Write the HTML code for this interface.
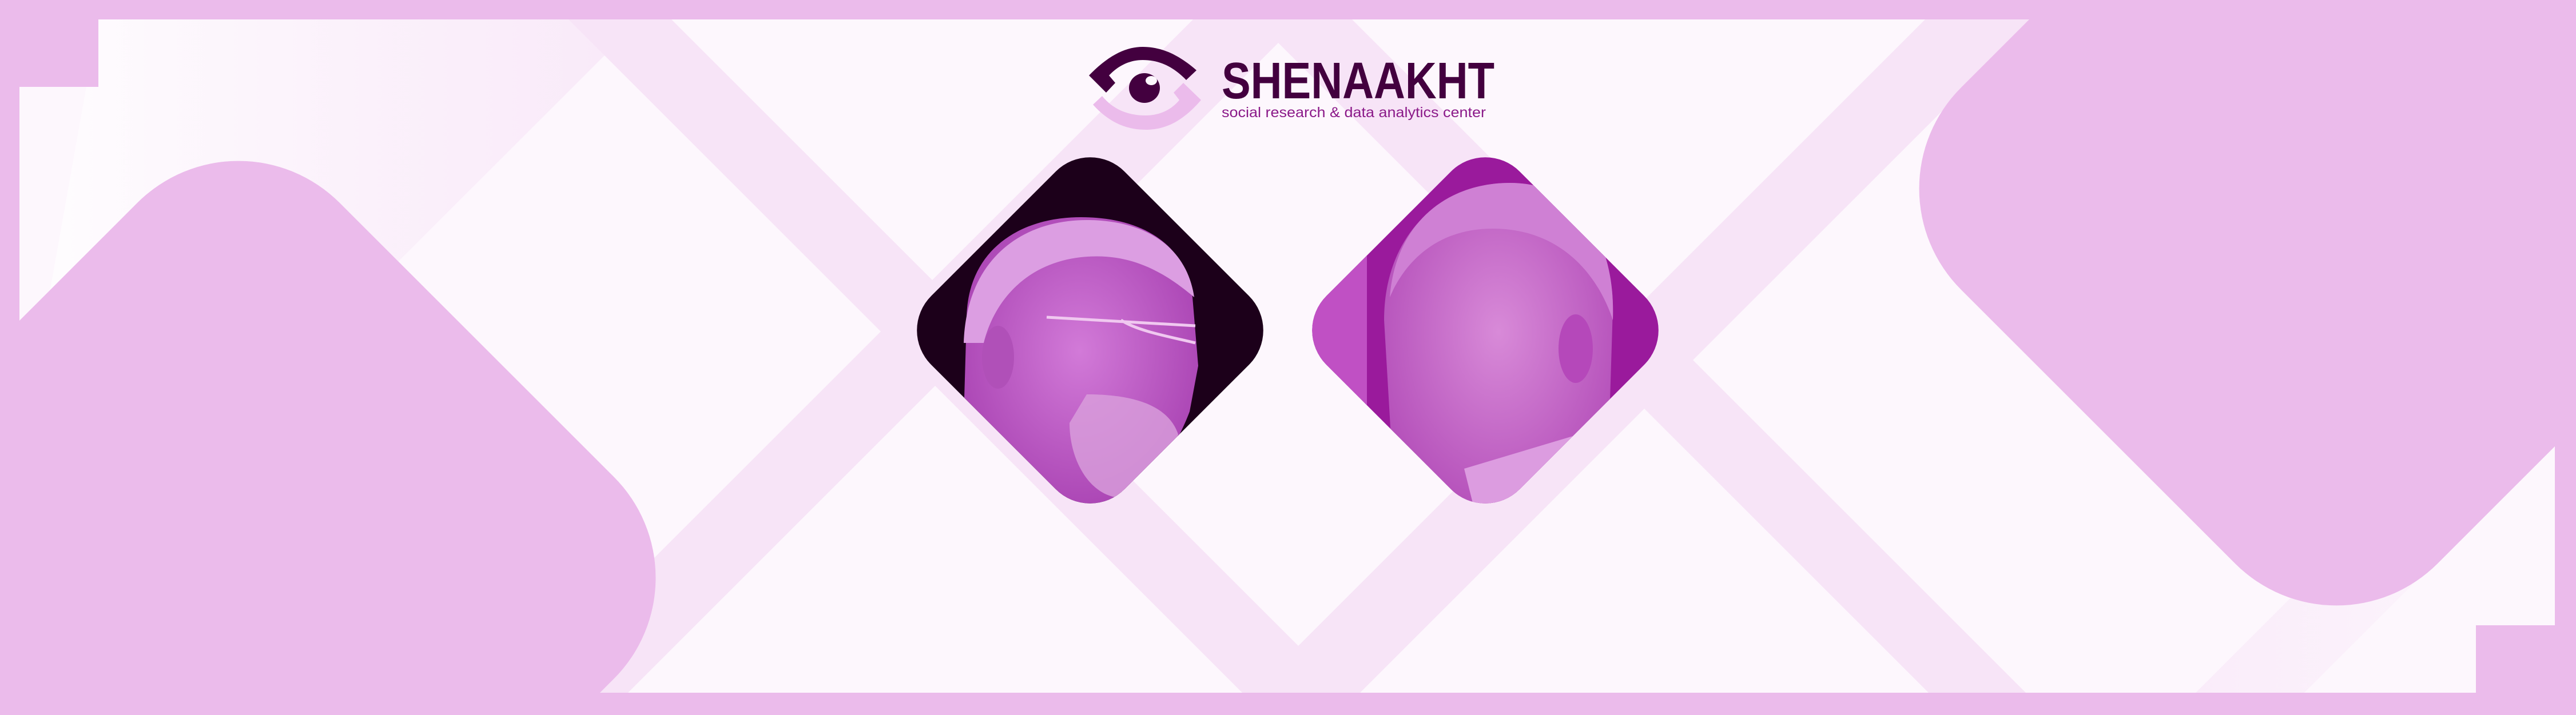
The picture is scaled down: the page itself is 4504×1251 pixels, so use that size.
<!DOCTYPE html>
<html><head><meta charset="utf-8"><style>
html,body{margin:0;padding:0;background:#ebbbeb;overflow:hidden;width:4504px;height:1251px;}
svg{display:block;}
</style></head><body>
<svg width="4504" height="1251" viewBox="0 0 4504 1251" xmlns="http://www.w3.org/2000/svg">
<defs>
<linearGradient id="tl" x1="0" y1="0" x2="1" y2="0">
<stop offset="0" stop-color="#ffffff"/><stop offset="1" stop-color="#f7e4f7" stop-opacity="0.8"/></linearGradient>
<linearGradient id="br" x1="0" y1="0" x2="1" y2="0">
<stop offset="0" stop-color="#f7e4f7"/><stop offset="1" stop-color="#fdf7fd"/></linearGradient>
<clipPath id="inner"><polygon points="172,34 4467,34 4467,1094 4329,1094 4329,1212 34,1212 34,152 172,152"/></clipPath>
<clipPath id="p1"><rect x="1667" y="339" width="478" height="478" rx="85" transform="rotate(45 1906 578)"/></clipPath>
<clipPath id="p2"><rect x="2358" y="339" width="478" height="478" rx="85" transform="rotate(45 2597 578)"/></clipPath>
<radialGradient id="f1" cx="0.5" cy="0.45" r="0.6"><stop offset="0" stop-color="#d27ad8"/><stop offset="1" stop-color="#a63fb0"/></radialGradient>
<radialGradient id="f2" cx="0.5" cy="0.45" r="0.6"><stop offset="0" stop-color="#d88ad8"/><stop offset="1" stop-color="#b24cb8"/></radialGradient>
</defs>
<rect width="4504" height="1251" fill="#ebbbeb"/>
<g clip-path="url(#inner)">
<rect width="4504" height="1251" fill="#fdf7fd"/>
<polygon points="172,34 1120,34 0,1154 0,1000" fill="url(#tl)" opacity="0.9"/>
<polygon points="2120,0 2310,0 0,2310 0,2120" fill="#f7e4f7"/>
<polygon points="3400,0 3590,0 0,3590 0,3400" fill="#f7e4f7"/>
<polygon points="960,0 1140,0 2391,1251 2211,1251" fill="#f7e4f7"/>
<polygon points="2160,0 2330,0 3581,1251 3411,1251" fill="#f7e4f7"/>
<polygon points="3800,1251 3990,1251 4500,741 4310,741" fill="url(#br)" opacity="0.6"/>
</g>
<rect x="-172" y="422" width="1178" height="1178" rx="250" fill="#ebbbeb" transform="rotate(45 417 1011)"/>
<rect x="3496" y="-259" width="1178" height="1178" rx="250" fill="#ebbbeb" transform="rotate(45 4085 330)"/>

<g clip-path="url(#p1)">
<rect x="1580" y="250" width="660" height="660" fill="#1c001a"/>
<path d="M1680,900 L1690,560 C1690,440 1780,380 1890,380 C2000,380 2075,430 2085,520 L2095,640 L2080,720 C2050,800 2000,850 1980,900 Z" fill="url(#f1)"/>
<path d="M1685,600 C1690,450 1790,385 1900,385 C2000,385 2075,430 2088,520 C2040,480 1980,440 1890,450 C1800,460 1740,520 1720,600 Z" fill="#dc9ee2"/>
<path d="M1900,690 C1960,690 2040,700 2060,760 C2040,820 1990,860 1950,870 C1900,860 1870,800 1870,740 Z" fill="#d9a0dc" opacity="0.8"/>
<ellipse cx="1745" cy="625" rx="28" ry="55" fill="#b050b8"/>
<path d="M1830,555 L2090,570 M1960,560 C1990,580 2050,590 2090,600" stroke="#f0c8f0" stroke-width="5" fill="none"/>
<path d="M1740,760 L1800,900 L1700,900 Z" fill="#8a2a92"/>
</g>
<g clip-path="url(#p2)">
<rect x="2270" y="250" width="660" height="660" fill="#9a1a9c"/>
<rect x="2270" y="250" width="120" height="660" fill="#c050c4"/>
<path d="M2440,900 L2420,560 C2420,410 2520,320 2640,320 C2760,320 2820,420 2820,540 L2815,700 C2790,790 2750,850 2700,900 Z" fill="url(#f2)"/>
<path d="M2430,520 C2440,390 2530,320 2640,320 C2760,320 2825,420 2820,560 C2790,470 2720,400 2610,400 C2520,400 2460,450 2430,520 Z" fill="#cf80d4"/>
<ellipse cx="2755" cy="610" rx="30" ry="60" fill="#b548ba"/>
<path d="M2560,820 L2760,760 L2820,800 L2760,900 L2580,900 Z" fill="#dc9ce0"/>
</g>

<path d="M1904,132 C1940,95 1970,82 1998,82 C2030,82 2060,95 2092,123 L2074,140 C2050,115 2025,105 1998,105 C1975,105 1955,115 1939,132 L1950,145 L1934,162 Z" fill="#43003f"/>
<path d="M2100,175 C2070,210 2040,227 2003,227 C1965,227 1935,210 1911,183 L1927,168 C1945,190 1970,202 2003,202 C2030,202 2050,190 2062,175 L2052,162 L2069,145 Z" fill="#ebbbeb"/>
<ellipse cx="2001" cy="154" rx="27" ry="26" fill="#43003f"/>
<ellipse cx="2013" cy="141" rx="10" ry="8" fill="#fdf7fd"/>
<text x="2136" y="172" font-family="Liberation Sans Narrow, Liberation Sans, sans-serif" font-size="90" font-weight="bold" fill="#43003f" textLength="477" lengthAdjust="spacingAndGlyphs">SHENAAKHT</text>
<text x="2136" y="205" font-family="Liberation Sans, sans-serif" font-size="25" fill="#8b1a89" textLength="462" lengthAdjust="spacingAndGlyphs">social research &amp; data analytics center</text>
</svg>
</body></html>
